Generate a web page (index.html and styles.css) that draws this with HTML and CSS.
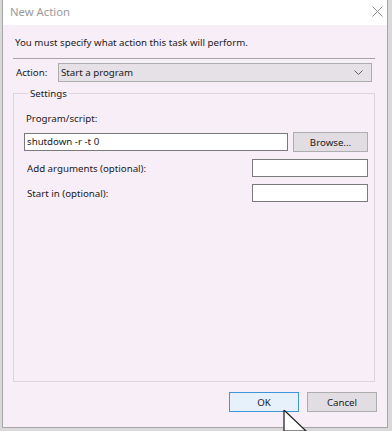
FILE: index.html
```html
<!DOCTYPE html>
<html>
  <head>
    <title>New Action</title>
    <link rel="stylesheet" href="styles.css">
  </head>
  <body>
    <div class="window">
      <div class="titlebar">
        <span class="title">New Action</span>
        <svg class="close" width="11" height="11" viewBox="0 0 11 11">
          <path d="M0.5 0.5 L10.5 10.5 M10.5 0.5 L0.5 10.5" stroke="#8c8c8c" stroke-width="1" fill="none" />
        </svg>
      </div>

      <div class="content">
        <p class="intro">You must specify what action this task will perform.</p>
        <div class="separator"></div>

        <div class="action-row">
          <span class="label">Action:</span>
          <div class="combo">
            <span>Start a program</span>
            <svg width="9" height="6" viewBox="0 0 9 6">
              <path d="M0.5 0.5 L4.5 4.5 L8.5 0.5" stroke="#606060" stroke-width="1" fill="none" />
            </svg>
          </div>
        </div>

        <fieldset class="settings">
          <legend>Settings</legend>
          <div class="field-label">Program/script:</div>
          <div class="program-row">
            <div class="textbox wide">shutdown -r -t 0</div>
            <div class="btn">Browse...</div>
          </div>
          <div class="opt-row first">
            <span class="label">Add arguments (optional):</span>
            <div class="textbox small"></div>
          </div>
          <div class="opt-row">
            <span class="label">Start in (optional):</span>
            <div class="textbox small"></div>
          </div>
        </fieldset>

        <div class="buttons">
          <div class="btn ok">OK</div>
          <div class="btn">Cancel</div>
        </div>
      </div>
    </div>

    <!-- mouse pointer over the OK button -->
    <svg class="cursor" width="24" height="22" viewBox="0 0 24 22">
      <path d="M1 0 L1 21 L23 21 Z" fill="#ffffff" stroke="#1a1a1a" stroke-width="1.2" />
    </svg>
  </body>
</html>
```

FILE: styles.css
```css
body {
  margin: 0;
  width: 392px;
  height: 431px;
  background: #d9d9d9;
  font-family: "Noto Sans", sans-serif;
  font-size: 9.7px;
  color: #1a1a1a;
  overflow: hidden;
  position: relative;
}
.window {
  margin-left: 2px;
  width: 384px;
  height: 427px;
  border: 1px solid #a6a6a6;
  border-top: none;
  background: #f8eef7;
}
.titlebar {
  height: 25px;
  background: #ffffff;
  display: flex;
  align-items: center;
  justify-content: space-between;
  padding: 0 4px 2px 7px;
  box-sizing: border-box;
}
.title {
  color: #9a9a9a;
  font-size: 11.3px;
}
.content {
  padding: 0 6px 0 10px;
}
.intro {
  margin: 0;
  padding: 11px 0 0 2px;
  height: 22px;
}
.separator {
  height: 1px;
  background: #a9a3aa;
  margin: 0 6px 0 0;
}
.action-row {
  display: flex;
  align-items: center;
  margin-top: 4px;
  padding-left: 3px;
}
.action-row .label {
  width: 42px;
}
.combo {
  flex: 1;
  margin-right: 9px;
  height: 19px;
  box-sizing: border-box;
  border: 1px solid #adadad;
  background: #e6e0e7;
  display: flex;
  align-items: center;
  justify-content: space-between;
  padding: 0 8px 0 2px;
}
.settings {
  margin: 5px 6px 0 0;
  height: 295px;
  box-sizing: border-box;
  border: 1px solid #dcd5dc;
  padding: 8px 6px 0 10px;
}
.settings legend {
  padding: 0 2px;
  margin-left: 4px;
}
.field-label {
  margin-top: 4px;
  height: 20px;
  padding-left: 2px;
}
.program-row {
  display: flex;
  align-items: center;
  justify-content: space-between;
}
.textbox {
  height: 18px;
  box-sizing: border-box;
  border: 1px solid #7a7a7a;
  background: #ffffff;
  padding: 0 2px;
  line-height: 16px;
}
.textbox.wide {
  width: 264px;
}
.textbox.small {
  width: 116px;
}
.btn {
  width: 75px;
  height: 20px;
  box-sizing: border-box;
  border: 1px solid #adadad;
  background: #e2dce3;
  display: flex;
  align-items: center;
  justify-content: center;
}
.opt-row {
  display: flex;
  align-items: center;
  justify-content: space-between;
  margin-top: 7px;
  padding-left: 3px;
}
.opt-row.first {
  margin-top: 7px;
}
.buttons {
  display: flex;
  justify-content: flex-end;
  gap: 8px;
  margin: 10px 4px 0 0;
}
.buttons .btn {
  width: 70px;
}
.btn.ok {
  border-color: #3f95d6;
  background: #e6f1fb;
}
.cursor {
  position: absolute;
  left: 283px;
  top: 410px;
}
```
